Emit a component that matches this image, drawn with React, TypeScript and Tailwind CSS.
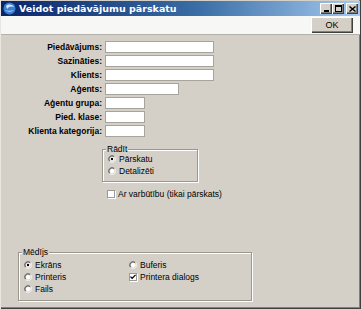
import type { ReactNode } from 'react'

const fields = [
  { label: 'Piedāvājums:', width: 'w-[109px]' },
  { label: 'Sazināties:', width: 'w-[109px]' },
  { label: 'Klients:', width: 'w-[109px]' },
  { label: 'Aģents:', width: 'w-[74px]' },
  { label: 'Aģentu grupa:', width: 'w-[40px]' },
  { label: 'Pied. klase:', width: 'w-[40px]' },
  { label: 'Klienta kategorija:', width: 'w-[40px]' },
]

function Radio({ checked }: { checked?: boolean }) {
  return (
    <svg width="8" height="8" viewBox="0 0 12 12" className="shrink-0">
      <circle cx="6" cy="6" r="4.5" fill="#ffffff" />
      <path d="M2.11 9.89A5.5 5.5 0 0 1 9.89 2.11" fill="none" stroke="#808080" strokeWidth="1.2" />
      <path d="M9.89 2.11A5.5 5.5 0 0 1 2.11 9.89" fill="none" stroke="#ffffff" strokeWidth="1.2" />
      <path d="M2.82 9.18A4.5 4.5 0 0 1 9.18 2.82" fill="none" stroke="#404040" strokeWidth="1.2" />
      <path d="M9.18 2.82A4.5 4.5 0 0 1 2.82 9.18" fill="none" stroke="#d4d0c8" strokeWidth="1.2" />
      {checked && <circle cx="6" cy="6" r="1.8" fill="#000000" />}
    </svg>
  )
}

function Check({ checked }: { checked?: boolean }) {
  return (
    <div className="flex h-[8px] w-[8px] shrink-0 items-center justify-center bg-white shadow-[inset_1px_1px_0_#808080,inset_-1px_-1px_0_#ffffff,1px_1px_0_#ffffff] outline outline-1 -outline-offset-1 outline-[#9a9a9a]">
      {checked && (
        <svg width="6" height="6" viewBox="0 0 7 7">
          <path d="M0.5 3 L2.5 5 L6.5 1" fill="none" stroke="#000" strokeWidth="1.4" />
        </svg>
      )}
    </div>
  )
}

function Option({ kind, checked, children }: { kind: 'radio' | 'check'; checked?: boolean; children: ReactNode }) {
  return (
    <div className="flex h-[12px] items-center gap-[2px]">
      {kind === 'radio' ? <Radio checked={checked} /> : <Check checked={checked} />}
      <span className="pl-[1px] text-[8.5px] leading-none text-black">{children}</span>
    </div>
  )
}

function GroupBox({ title, className, children }: { title: string; className: string; children: ReactNode }) {
  return (
    <div className={`relative border border-[#9a978f] shadow-[1px_1px_0_#ffffff,inset_1px_1px_0_#ffffff] ${className}`}>
      <span className="absolute -top-[6px] left-[3px] bg-[#d4d0c8] px-[1px] text-[8.5px] leading-[10px] text-black">
        {title}
      </span>
      {children}
    </div>
  )
}

function TitleButton({ children, className = '' }: { children: ReactNode; className?: string }) {
  return (
    <div
      className={`flex h-[11px] w-[12px] items-center justify-center bg-[#d4d0c8] shadow-[inset_1px_1px_0_#ffffff,inset_-1px_-1px_0_#404040,inset_-2px_-2px_0_#808080] ${className}`}
    >
      {children}
    </div>
  )
}

export default function App() {
  return (
    <div className="flex h-[309px] w-[361px] flex-col overflow-hidden bg-[#d4d0c8] font-['Liberation_Sans',Arial,sans-serif] shadow-[inset_1px_0_0_#e8e6e1,inset_-1px_-1px_0_#404040,inset_-2px_-2px_0_#808080]">
      {/* title bar */}
      <div className="mx-[1px] mt-[1px] flex h-[15px] shrink-0 items-center bg-[linear-gradient(90deg,#0a246a_0%,#3a6ea5_55%,#a6caf0_100%)] pl-[2px] pr-[2px]">
        <svg width="13" height="13" viewBox="0 0 13 13" className="shrink-0">
          <circle cx="6.5" cy="6.5" r="6" fill="#3b7fd0" />
          <path d="M3 4 C5 2 9 2 11 5 C9 4 6 4 4 7 Z" fill="#cfe6ff" />
          <path d="M2 8 C4 10 8 11 11 8 C8 9 5 9 2 8 Z" fill="#9cc8f5" />
        </svg>
        <span className="ml-[3px] font-['DejaVu_Sans',sans-serif] text-[9.5px] font-bold leading-none text-white">
          Veidot piedāvājumu pārskatu
        </span>
        <div className="ml-auto flex items-center">
          <TitleButton>
            <div className="mt-[5px] h-[2px] w-[5px] bg-black" />
          </TitleButton>
          <TitleButton>
            <div className="h-[7px] w-[7px] border border-t-2 border-black" />
          </TitleButton>
          <TitleButton className="ml-[2px]">
            <svg width="7" height="6" viewBox="0 0 7 6">
              <path d="M0.5 0.5 L6.5 5.5 M6.5 0.5 L0.5 5.5" stroke="#000" strokeWidth="1.4" />
            </svg>
          </TitleButton>
        </div>
      </div>

      {/* toolbar */}
      <div className="mx-[1px] flex h-[19px] shrink-0 items-center justify-end border-b border-[#b4b1aa] bg-[#f7f7f5] pr-[7px]">
        <div className="flex h-[16px] w-[42px] items-center justify-center bg-[#d4d0c8] text-[9px] leading-none text-black shadow-[inset_1px_1px_0_#ffffff,inset_-1px_-1px_0_#404040,inset_-2px_-2px_0_#808080]">
          OK
        </div>
      </div>

      {/* body */}
      <div className="flex flex-1 flex-col pb-[8px] pt-[6px]">
        <div className="grid grid-cols-[102px_auto] items-center gap-x-[3px] gap-y-[2px]">
          {fields.map((f) => (
            <div key={f.label} className="contents">
              <span className="text-right text-[8.5px] font-bold leading-none text-black">{f.label}</span>
              <div className={`h-[12px] ${f.width} border border-[#a7a49d] bg-white`} />
            </div>
          ))}
        </div>

        <GroupBox title="Rādīt" className="ml-[102px] mt-[12px] h-[33px] w-[96px] pl-[5px] pt-[3px]">
          <Option kind="radio" checked>
            Pārskatu
          </Option>
          <Option kind="radio">Detalizēti</Option>
        </GroupBox>

        <div className="ml-[107px] mt-[6px]">
          <Option kind="check">Ar varbūtību (tikai pārskats)</Option>
        </div>

        <GroupBox title="Mēdījs" className="ml-[18px] mt-auto h-[49px] w-[234px] pl-[5px] pt-[6px]">
          <div className="grid grid-cols-[105px_auto]">
            <Option kind="radio" checked>
              Ekrāns
            </Option>
            <Option kind="radio">Buferis</Option>
            <Option kind="radio">Printeris</Option>
            <Option kind="check" checked>
              Printera dialogs
            </Option>
            <Option kind="radio">Fails</Option>
          </div>
        </GroupBox>
      </div>
    </div>
  )
}
